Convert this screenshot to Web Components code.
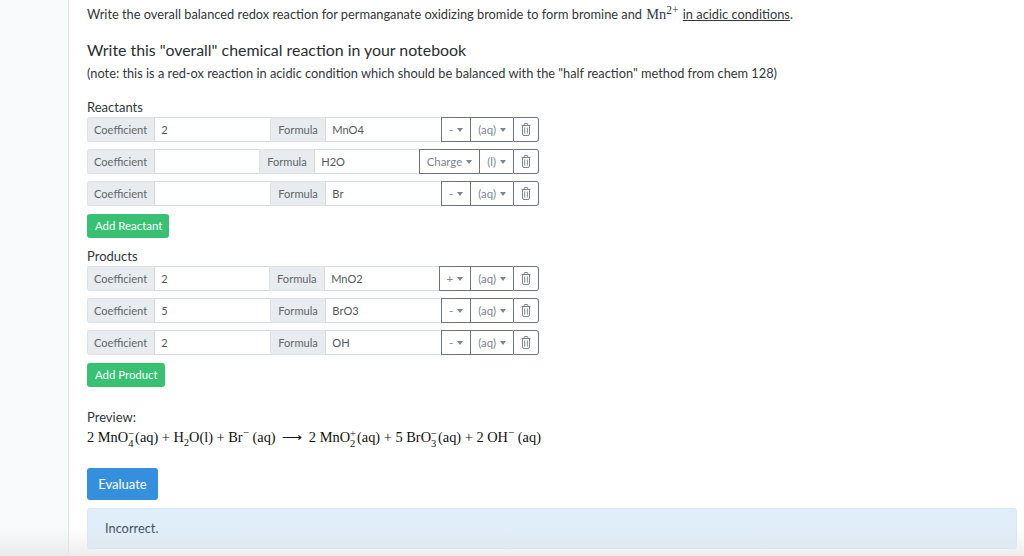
<!DOCTYPE html>
<html lang="en">
<head>
<meta charset="utf-8">
<title>Reaction</title>
<style>
html, body { margin: 0; height: 556px; overflow: hidden; background: #fff; }
body { font-family: "Lato", "Open Sans", sans-serif; font-size: 12.8px; color: #33373a; }
</style>
</head>
<body>
<page-shell>
	<question-text></question-text>
	<species-group label="Reactants" add="Add Reactant" first>
		<species-row coefficient="2" formula="MnO4" charge="-" state="(aq)"></species-row>
		<species-row formula="H2O" charge="Charge" state="(l)"></species-row>
		<species-row formula="Br" charge="-" state="(aq)"></species-row>
	</species-group>
	<species-group label="Products" add="Add Product">
		<species-row coefficient="2" formula="MnO2" charge="+" state="(aq)"></species-row>
		<species-row coefficient="5" formula="BrO3" charge="-" state="(aq)"></species-row>
		<species-row coefficient="2" formula="OH" charge="-" state="(aq)"></species-row>
	</species-group>
	<reaction-preview></reaction-preview>
	<evaluate-box></evaluate-box>
</page-shell>

<script>
class PageShell extends HTMLElement {
	constructor() {
		super();
		this.attachShadow({ mode: 'open' });
		this.shadowRoot.innerHTML = `
<style>
	:host { display: flex; height: 556px; position: relative; overflow: hidden; }
	.side { width: 68px; flex: none; background: #f9fafc; border-right: 1px solid #e2e3e5; }
	.main { flex: 1; padding: 0 7px 0 18px; min-width: 0; }
	.fade { position: absolute; left: 0; right: 0; bottom: 0; height: 28px; pointer-events: none;
		background: linear-gradient(to bottom, rgba(225,225,225,0), rgba(225,225,225,.6)); }
</style>
<div class="side"></div>
<div class="main"><slot></slot></div>
<div class="fade"></div>`;
	}
}
customElements.define('page-shell', PageShell);

class QuestionText extends HTMLElement {
	constructor() {
		super();
		this.attachShadow({ mode: 'open' });
		this.shadowRoot.innerHTML = `
<style>
	:host { display: block; padding-top: 5px; }
	p { margin: 0; line-height: 18px; }
	.mn { font-family: "Liberation Serif", serif; font-size: 14.4px; margin-left: 1px; }
	sup { font-family: "Liberation Serif", serif; font-size: 11.5px; line-height: 0; vertical-align: 5px; }
	u { margin-left: 1px; }
	h2 { margin: 17px 0 0; font-weight: 400; font-size: 15.9px; line-height: 20px; color: #2b2e31; }
	.note { margin-top: 4px; }
</style>
<p>Write the overall balanced redox reaction for permanganate oxidizing bromide to form bromine and <span class="mn">Mn</span><sup>2+</sup> <u>in acidic conditions</u>.</p>
<h2>Write this "overall" chemical reaction in your notebook</h2>
<p class="note">(note: this is a red-ox reaction in acidic condition which should be balanced with the "half reaction" method from chem 128)</p>`;
	}
}
customElements.define('question-text', QuestionText);

class SpeciesGroup extends HTMLElement {
	constructor() {
		super();
		this.attachShadow({ mode: 'open' });
	}

	connectedCallback() {
		const first = this.hasAttribute('first');
		this.shadowRoot.innerHTML = `
<style>
	:host { display: block; width: 452px; margin-top: ${first ? 16 : 9}px; }
	.label { line-height: 18px; margin-bottom: 1px; font-size: 13px; }
	.rows { display: flex; flex-direction: column; gap: 7px; }
	button { display: block; margin-top: 8px; height: 24px; padding: 0 7px 2px 8px; border: 0; border-radius: 3px;
		background: #38c172; color: #fff; font: inherit; font-size: 11.4px; }
</style>
<div class="label">${this.getAttribute('label')}</div>
<div class="rows"><slot></slot></div>
<button>${this.getAttribute('add')}</button>`;
	}
}
customElements.define('species-group', SpeciesGroup);

class SpeciesRow extends HTMLElement {
	constructor() {
		super();
		this.attachShadow({ mode: 'open' });
	}

	connectedCallback() {
		const coefficient = this.getAttribute('coefficient') || '';
		this.shadowRoot.innerHTML = `
<style>
	:host { display: flex; height: 25px; font-size: 11.1px; color: #60656a; }
	.addon { display: flex; align-items: center; padding: 0 7.5px; background: #e9ecef; border: 1px solid #dfe2e6; border-right: 0; white-space: nowrap; }
	.addon.lead { padding: 0 7px 0 6px; border-radius: 3px 0 0 3px; }
	.field { flex: 1 1 0; min-width: 0; display: flex; align-items: center; padding: 0 6px; background: #fff; border: 1px solid #d5dade; border-right: 0; color: #54595e; }
	.drop { display: flex; align-items: center; gap: 4px; padding: 0 7px; background: #fff; border: 1px solid #6c757d; border-right: 0; color: #7d858c; font-size: 11.4px; white-space: nowrap; }
	.drop i { width: 0; height: 0; border-left: 3.5px solid transparent; border-right: 3.5px solid transparent; border-top: 4px solid #7d858c; }
	.trash { display: flex; align-items: center; justify-content: center; width: 24px; background: #fff; border: 1px solid #6c757d; border-radius: 0 3px 3px 0; }
	svg { width: 10px; height: 13px; }
</style>
<span class="addon lead">Coefficient</span>
<span class="field">${coefficient}</span>
<span class="addon">Formula</span>
<span class="field">${this.getAttribute('formula')}</span>
<span class="drop">${this.getAttribute('charge')}<i></i></span>
<span class="drop">${this.getAttribute('state')}<i></i></span>
<span class="trash">
	<svg viewBox="0 0 10 13" fill="none" stroke="#7d858c" stroke-width="1">
		<path d="M.5 2.5h9M3.2 2.5V1.200a.7.7 0 0 1 .7-.7h2.200a.7.7 0 0 1 .7.7v1.300M1.500 2.500v8.500a1.500 1.500 0 0 0 1.500 1.500h4a1.500 1.500 0 0 0 1.500-1.500V2.500M3.700 4.500v6M6.300 4.500v6"/>
	</svg>
</span>`;
	}
}
customElements.define('species-row', SpeciesRow);

class ReactionPreview extends HTMLElement {
	constructor() {
		super();
		this.attachShadow({ mode: 'open' });
		this.shadowRoot.innerHTML = `
<style>
	:host { display: block; margin-top: 21px; }
	.label { line-height: 18px; font-size: 13px; }
	.eq { margin-top: 1px; height: 20px; line-height: 20px; font-family: "Liberation Serif", serif; font-size: 14.4px; color: #111; white-space: nowrap; }
	.st { display: inline-flex; flex-direction: column; vertical-align: middle; font-size: 10.5px; line-height: 10px; text-align: left; margin: 0 1px 0 0; }
	sub { font-size: 10px; line-height: 0; }
	sup { font-size: 11px; line-height: 0; }
	.arrow { margin: 0 3px; }
</style>
<div class="label">Preview:</div>
<div class="eq">2 MnO<span class="st"><span>−</span><span>4</span></span>(aq) + H<sub>2</sub>O(l) + Br<sup>−</sup> (aq) <span class="arrow">⟶</span> 2 MnO<span class="st"><span>+</span><span>2</span></span>(aq) + 5 BrO<span class="st"><span>−</span><span>3</span></span>(aq) + 2 OH<sup>−</sup> (aq)</div>`;
	}
}
customElements.define('reaction-preview', ReactionPreview);

class EvaluateBox extends HTMLElement {
	constructor() {
		super();
		this.attachShadow({ mode: 'open' });
		this.shadowRoot.innerHTML = `
<style>
	:host { display: block; margin-top: 21px; }
	button { display: block; width: 71px; height: 32px; border: 0; border-radius: 3px; background: #3490dc; color: #fff; font: inherit; font-size: 13px; }
	.alert { margin-top: 8px; height: 41px; box-sizing: border-box; display: flex; align-items: center; padding: 0 17px 1px; background: #e0eefa; border: 1px solid #d8e8f6; border-radius: 3px; color: #3d4f5e; }
</style>
<button>Evaluate</button>
<div class="alert">Incorrect.</div>`;
	}
}
customElements.define('evaluate-box', EvaluateBox);
</script>
</body>
</html>
